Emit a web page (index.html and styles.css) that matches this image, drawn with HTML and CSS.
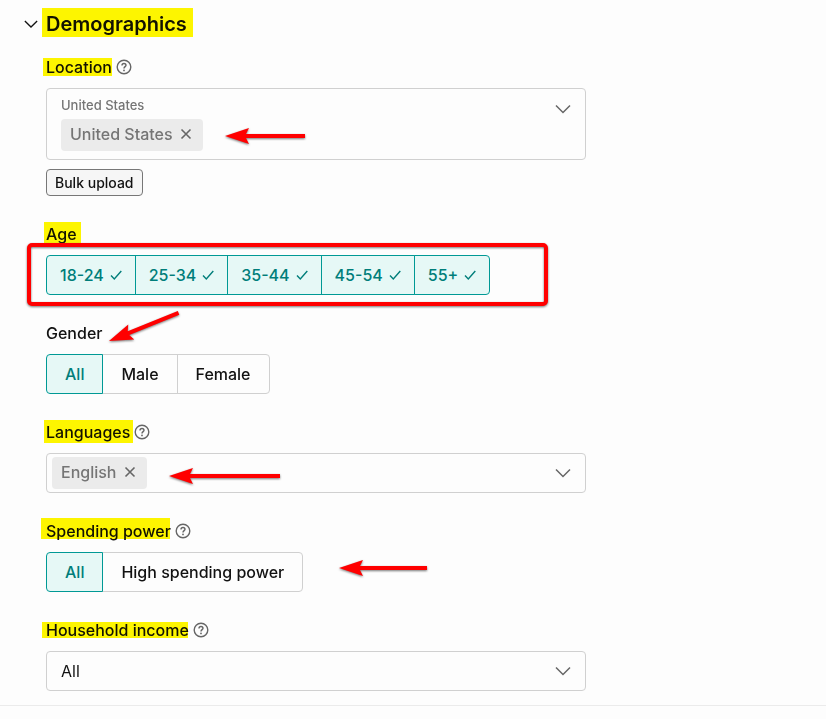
FILE: index.html
```html
<!DOCTYPE html>
<html lang="en">
<head>
<meta charset="utf-8">
<meta name="viewport" content="width=device-width, initial-scale=1">
<title>Demographics</title>
<link rel="stylesheet" href="styles.css">
</head>
<body>
<svg class="sprite" aria-hidden="true">
  <symbol id="chevron" viewBox="0 0 16 16"><path d="M1 4.5L8 11.5L15 4.5" fill="none" stroke="currentColor" stroke-width="1.5"/></symbol>
  <symbol id="check" viewBox="0 0 12 12"><path d="M1 6.5L4.3 10L11.3 2" fill="none" stroke="currentColor" stroke-width="1.4"/></symbol>
  <symbol id="close" viewBox="0 0 12 12"><path d="M1.5 1.5L10.5 10.5M10.5 1.5L1.5 10.5" fill="none" stroke="currentColor" stroke-width="1.6"/></symbol>
  <symbol id="help" viewBox="0 0 16 16"><circle cx="8" cy="8" r="6.8" fill="none" stroke="currentColor" stroke-width="1.4"/><path d="M6 6.5C6 5.2 6.8 4.5 8 4.5S10 5.2 10 6.3C10 7.6 8 7.7 8 9.4" fill="none" stroke="currentColor" stroke-width="1.4"/><circle cx="8" cy="11.4" r="0.9" fill="currentColor"/></symbol>
</svg>
<main class="panel">
  <header class="panel-header">
    <button class="toggle" type="button" aria-label="Collapse demographics" aria-expanded="true"><svg class="icon-toggle"><use href="#chevron"/></svg></button>
    <h2 class="title">Demographics</h2>
  </header>
  <form class="fields">
    <section class="field" aria-labelledby="location">
      <div class="label-row"><h3 class="label" id="location">Location</h3><button class="help" type="button" aria-label="About location"><svg class="icon"><use href="#help"/></svg></button></div>
      <div class="picker picker-grouped">
        <div class="picker-values">
          <span class="group-name">United States</span>
          <span class="tag">United States<button class="remove" type="button" aria-label="Remove United States"><svg class="icon-small"><use href="#close"/></svg></button></span>
        </div>
        <button class="open" type="button" aria-label="Choose locations"><svg class="icon"><use href="#chevron"/></svg></button>
      </div>
      <button class="bulk" type="button">Bulk upload</button>
    </section>
    <section class="field" aria-labelledby="age">
      <div class="label-row"><h3 class="label" id="age">Age</h3></div>
      <div class="segments segments-check">
        <label class="segment"><input type="checkbox" name="age" checked>18-24<svg class="icon-small"><use href="#check"/></svg></label>
        <label class="segment"><input type="checkbox" name="age" checked>25-34<svg class="icon-small"><use href="#check"/></svg></label>
        <label class="segment"><input type="checkbox" name="age" checked>35-44<svg class="icon-small"><use href="#check"/></svg></label>
        <label class="segment"><input type="checkbox" name="age" checked>45-54<svg class="icon-small"><use href="#check"/></svg></label>
        <label class="segment"><input type="checkbox" name="age" checked>55+<svg class="icon-small"><use href="#check"/></svg></label>
      </div>
    </section>
    <section class="field" aria-labelledby="gender">
      <div class="label-row"><h3 class="label" id="gender">Gender</h3></div>
      <div class="segments">
        <label class="segment"><input type="radio" name="gender" checked>All</label>
        <label class="segment"><input type="radio" name="gender">Male</label>
        <label class="segment"><input type="radio" name="gender">Female</label>
      </div>
    </section>
    <section class="field" aria-labelledby="languages">
      <div class="label-row"><h3 class="label" id="languages">Languages</h3><button class="help" type="button" aria-label="About languages"><svg class="icon"><use href="#help"/></svg></button></div>
      <div class="picker">
        <div class="picker-values">
          <span class="tag">English<button class="remove" type="button" aria-label="Remove English"><svg class="icon-small"><use href="#close"/></svg></button></span>
        </div>
        <button class="open" type="button" aria-label="Choose languages"><svg class="icon"><use href="#chevron"/></svg></button>
      </div>
    </section>
    <section class="field" aria-labelledby="spending">
      <div class="label-row"><h3 class="label" id="spending">Spending power</h3><button class="help" type="button" aria-label="About spending power"><svg class="icon"><use href="#help"/></svg></button></div>
      <div class="segments">
        <label class="segment"><input type="radio" name="spending" checked>All</label>
        <label class="segment"><input type="radio" name="spending">High spending power</label>
      </div>
    </section>
    <section class="field">
      <div class="label-row"><label class="label" for="income">Household income</label><button class="help" type="button" aria-label="About household income"><svg class="icon"><use href="#help"/></svg></button></div>
      <div class="select-wrap">
        <select class="select" id="income"><option>All</option></select>
        <svg class="icon select-icon"><use href="#chevron"/></svg>
      </div>
    </section>
  </form>
  <svg class="highlights" width="600" height="700" aria-hidden="true" fill="#fff700">
    <rect x="42" y="8" width="151" height="29"/>
    <rect x="43" y="58" width="69" height="18"/>
    <rect x="44" y="222" width="37" height="22"/>
    <rect x="44" y="420" width="89" height="23"/>
    <rect x="41" y="518" width="129" height="21"/>
    <rect x="42" y="622" width="146" height="16"/>
  </svg>
  <svg class="marks" width="600" height="700" aria-hidden="true">
    <rect x="29" y="245" width="517" height="59" rx="3" fill="none" stroke="#f00" stroke-width="4"/>
    <g fill="#f00">
      <path d="M225 136L249 128L246 134H305V138H246L249 144Z"/>
      <path d="M169 476L193 468L190 474H280V478H190L193 484Z"/>
      <path d="M339 568L363 560L360 566H427V570H360L363 576Z"/>
      <path transform="translate(109 341) rotate(-22)" d="M0 0L24 -8L21 -2H75V2H21L24 8Z"/>
    </g>
  </svg>
</main>
</body>
</html>
```
FILE: styles.css
```css
* { box-sizing: border-box; }
body {
  margin: 0;
  background: #fdfdfd;
  color: #121212;
  font-family: Inter, "Noto Sans", sans-serif;
  font-size: 16px;
  font-weight: 500;
  line-height: 24px;
}
button, select { font: inherit; color: inherit; }
button { padding: 0; border: 0; background: none; cursor: pointer; }
svg { display: block; }
.sprite { position: absolute; width: 0; height: 0; }
.icon { width: 16px; height: 16px; }
.icon-small { width: 12px; height: 12px; }
.icon-toggle { width: 14px; height: 14px; }

.panel {
  position: relative;
  padding: 9px 24px 14px;
  border-bottom: 1px solid #ebebeb;
}
.panel-header { display: flex; align-items: center; gap: 8px; }
.title { margin: 0; font-size: 20px; line-height: 30px; font-weight: 600; }
.fields {
  display: flex;
  flex-direction: column;
  gap: 26px;
  max-width: 562px;
  padding: 16px 0 0 22px;
}
.field { display: flex; flex-direction: column; align-items: flex-start; }
.label-row { display: flex; align-items: center; gap: 4px; margin-bottom: 9px; }
.label { margin: 0; font-size: 16px; font-weight: 500; }
.help { color: #666; }

.picker {
  display: flex;
  align-items: center;
  justify-content: space-between;
  width: 100%;
  min-height: 40px;
  padding: 0 14px 0 5px;
  border: 1px solid #d0d0d0;
  border-radius: 4px;
  color: #757575;
}
.picker-grouped { align-items: flex-start; padding: 4px 14px 8px; }
.picker-values { display: flex; flex-direction: column; align-items: flex-start; gap: 2px; }
.group-name { font-size: 13px; line-height: 24px; }
.tag {
  display: flex;
  align-items: center;
  gap: 7px;
  height: 32px;
  padding: 0 11px 2px 9px;
  border-radius: 4px;
  background: #ebebeb;
}
.remove, .open { color: #666; }
.picker-grouped .open { margin-top: 8px; }
.bulk {
  margin-top: 9px;
  padding: 0 8px;
  border: 1px solid #777;
  border-radius: 4px;
  background: #f6f6f6;
  font-size: 14px;
  line-height: 25px;
}

.segments { display: flex; }
.segment {
  display: flex;
  align-items: center;
  gap: 6px;
  height: 40px;
  margin-left: -1px;
  padding: 0 18px;
  border: 1px solid #d0d0d0;
  cursor: pointer;
}
.segments-check .segment { padding: 0 13px; }
.segment:first-child { margin-left: 0; border-radius: 4px 0 0 4px; }
.segment:last-child { border-radius: 0 4px 4px 0; }
.segment:has(:checked) { z-index: 1; border-color: #009995; background: #e6f8f6; color: #007e7a; }
.segment input { position: absolute; opacity: 0; pointer-events: none; }

.select-wrap { position: relative; width: 100%; }
.select {
  display: block;
  width: 100%;
  height: 40px;
  padding: 0 40px 0 14px;
  border: 1px solid #d0d0d0;
  border-radius: 4px;
  background: transparent;
  font-weight: 400;
  appearance: none;
}
.select-icon { position: absolute; top: 12px; right: 15px; color: #666; pointer-events: none; }

.highlights, .marks { position: absolute; top: 0; left: 0; pointer-events: none; }
.highlights { mix-blend-mode: multiply; }
.marks { z-index: 2; filter: drop-shadow(0 1px 1px #777); }
```
